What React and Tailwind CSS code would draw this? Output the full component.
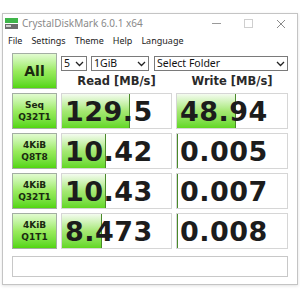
import React from "react";

const rows = [
  { top: "Seq", bottom: "Q32T1", read: "129.5", write: "48.94", readPct: 62, writePct: 54 },
  { top: "4KiB", bottom: "Q8T8", read: "10.42", write: "0.005", readPct: 40, writePct: 0 },
  { top: "4KiB", bottom: "Q32T1", read: "10.43", write: "0.007", readPct: 40, writePct: 0 },
  { top: "4KiB", bottom: "Q1T1", read: "8.473", write: "0.008", readPct: 37, writePct: 0 },
];

const btn =
  "flex flex-col items-center justify-center w-[45px] h-[36px] border border-[#a3aea3] bg-gradient-to-b from-[#e2fbd0] via-[#9aeb5e] to-[#52d60c] text-[#1b2a10] font-bold font-['DejaVu_Sans',sans-serif]";

const Meter = ({ value, pct, width }) => (
  <div className={`relative h-[36px] ${width} border border-[#d6d6d6] bg-white overflow-hidden`}>
    <div
      className="absolute left-0 top-0 bottom-0 bg-gradient-to-b from-[#f4fbef] via-[#a6e873] to-[#62d820] border-r border-[#4a8a2a]"
      style={{ width: pct + "%" }}
    />
    <div className="relative h-full flex items-center pl-[3px] text-[27px] leading-none font-bold text-[#1c1c1c] font-['DejaVu_Sans',sans-serif] tracking-[0.5px]">
      {value}
    </div>
  </div>
);

const Select = ({ label, width }) => (
  <div className={`${width} h-[15px] border border-[#7a7a7a] bg-white flex items-center justify-between px-[2px] text-[10.5px] leading-none text-[#111] font-['Noto_Sans',sans-serif]`}>
    <span>{label}</span>
    <svg width="9" height="6" viewBox="0 0 9 6">
      <path d="M1 1 L4.5 4.5 L8 1" fill="none" stroke="#222" strokeWidth="1.3" />
    </svg>
  </div>
);

export default function App() {
  return (
    <div className="w-[300px] h-[300px] bg-white pt-[13px] pl-[2px]">
      <div className="w-[296px] h-[272px] border border-[#c4c4c4] bg-white shadow-[0_1px_3px_rgba(0,0,0,0.12)] flex flex-col">
        <div className="h-[19px] flex items-center pl-[2px] text-[10px] text-[#8a8a8a] font-['Noto_Sans',sans-serif]">
          <svg width="13" height="13" viewBox="0 0 13 13" className="mr-[4px]">
            <rect x="0" y="1" width="13" height="5" fill="#3fb54a" />
            <rect x="0" y="7" width="13" height="5" fill="#6d6d6d" />
            <rect x="1" y="8" width="5" height="2" fill="#cfcfcf" />
          </svg>
          <span>CrystalDiskMark 6.0.1 x64</span>
          <div className="ml-auto flex items-center gap-[23px] pr-[11px]">
            <span className="w-[9px] h-[1px] bg-[#9a9a9a]" />
            <span className="w-[9px] h-[9px] border border-[#cfcfcf]" />
            <svg width="10" height="10" viewBox="0 0 10 10">
              <path d="M1 1 L9 9 M9 1 L1 9" stroke="#8a8a8a" strokeWidth="1" />
            </svg>
          </div>
        </div>
        <div className="h-[15px] flex items-center gap-[9px] pl-[5px] text-[9px] text-[#222] font-['Noto_Sans',sans-serif]">
          <span>File</span>
          <span>Settings</span>
          <span>Theme</span>
          <span>Help</span>
          <span>Language</span>
        </div>
        <div className="pl-[9px] pt-[5px] flex flex-col gap-[4px]">
          <div className="flex gap-[4px]">
            <div className={btn + " text-[14px]"}>All</div>
            <div className="flex flex-col pt-[3px]">
              <div className="flex">
                <Select label="5" width="w-[26px]" />
                <div className="w-[4px]" />
                <Select label="1GiB" width="w-[58px]" />
                <div className="w-[5px]" />
                <Select label="Select Folder" width="w-[134px]" />
              </div>
              <div className="flex mt-[3px] h-[15px] leading-[15px] text-[11.5px] font-bold text-[#2a2a2a] font-['DejaVu_Sans',sans-serif]">
                <div className="w-[111px] text-center">Read [MB/s]</div>
                <div className="w-[4px]" />
                <div className="w-[112px] text-center">Write [MB/s]</div>
              </div>
            </div>
          </div>
          {rows.map((r) => (
            <div key={r.top + r.bottom} className="flex gap-[4px]">
              <div className={btn + " text-[9px] leading-[12px]"}>
                <span>{r.top}</span>
                <span>{r.bottom}</span>
              </div>
              <Meter value={r.read} pct={r.readPct} width="w-[111px]" />
              <Meter value={r.write} pct={r.writePct} width="w-[112px]" />
            </div>
          ))}
          <div className="mt-[3px] w-[276px] h-[21px] border border-[#c8c8c8] bg-white" />
        </div>
      </div>
    </div>
  );
}
